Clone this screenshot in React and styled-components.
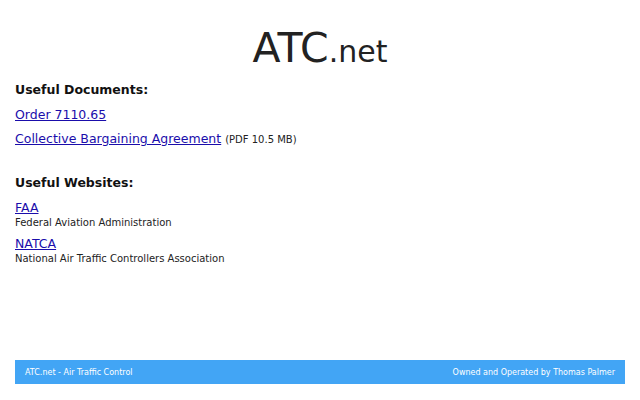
import React from 'react'
import styled, { createGlobalStyle } from 'styled-components'

const GlobalStyle = createGlobalStyle`
  html, body {
    margin: 0;
    padding: 0;
    background: #fff;
  }
  body {
    font-family: "DejaVu Sans", sans-serif;
    color: #222;
  }
`

const Page = styled.div`
  display: flex;
  flex-direction: column;
  min-height: 100vh;
  box-sizing: border-box;
  padding: 0 15px 16px;
`

const Title = styled.h1`
  margin: 24px 0 0;
  text-align: center;
  font-weight: normal;
  font-size: 41px;
  line-height: 48px;
  color: #222;
  small {
    font-size: 30px;
  }
`

const Section = styled.section`
  margin-top: ${p => p.$top || 0}px;
`

const Heading = styled.h3`
  margin: 0;
  font-size: 12.5px;
  line-height: 16px;
  font-weight: bold;
  color: #111;
`

const DocRow = styled.p`
  margin: ${p => p.$top}px 0 0;
  font-size: 12.5px;
  line-height: 16px;
  a {
    color: #1a0dab;
  }
  span {
    font-size: 10px;
    color: #222;
  }
`

const Site = styled.div`
  margin-top: ${p => p.$top}px;
  font-size: 12.5px;
  a {
    display: block;
    color: #1a0dab;
    line-height: 16px;
  }
  p {
    margin: 0;
    font-size: 10px;
    line-height: 13px;
    color: #222;
  }
`

const Footer = styled.footer`
  margin-top: auto;
  display: flex;
  justify-content: space-between;
  align-items: center;
  height: 24px;
  padding: 0 10px;
  background: #42a5f5;
  color: #fff;
  font-size: 8px;
`

export default function App() {
  return (
    <>
      <GlobalStyle />
      <Page>
        <Title>ATC<small>.net</small></Title>
        <Section $top={6}>
          <Heading>Useful Documents:</Heading>
          <DocRow $top={9}><a href="#">Order 7110.65</a></DocRow>
          <DocRow $top={8}><a href="#">Collective Bargaining Agreement</a> <span>(PDF 10.5 MB)</span></DocRow>
        </Section>
        <Section $top={27}>
          <Heading>Useful Websites:</Heading>
          <Site $top={9}>
            <a href="#">FAA</a>
            <p>Federal Aviation Administration</p>
          </Site>
          <Site $top={7}>
            <a href="#">NATCA</a>
            <p>National Air Traffic Controllers Association</p>
          </Site>
        </Section>
        <Footer>
          <span>ATC.net - Air Traffic Control</span>
          <span>Owned and Operated by Thomas Palmer</span>
        </Footer>
      </Page>
    </>
  )
}
